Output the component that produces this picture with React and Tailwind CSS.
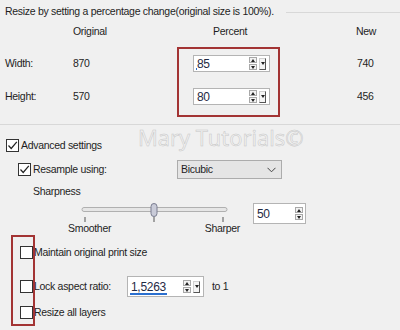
import React from "react";

const Spin = ({ value, dropdown = true, bar = 0, className = "" }) => {
  return (
    <div className={`relative flex items-center bg-white border border-[#b4b4b4] ${className}`}>
      <span className="pl-[3px] text-[12px] text-[#1f2a44] leading-none flex-1">{value}</span>
      {/* up / down buttons */}
      <div className="flex flex-col gap-[1px] mr-[2px]">
        <div className="w-[8px] h-[6px] border border-[#a8a8a8] bg-[#f2f2f2] flex items-center justify-center">
          <svg width="4" height="3" viewBox="0 0 4 3"><path d="M0 3 L2 0 L4 3 Z" fill="#222" /></svg>
        </div>
        <div className="w-[8px] h-[6px] border border-[#a8a8a8] bg-[#f2f2f2] flex items-center justify-center">
          <svg width="4" height="3" viewBox="0 0 4 3"><path d="M0 0 L2 3 L4 0 Z" fill="#222" /></svg>
        </div>
      </div>
      {dropdown && (
        <div className="w-[7px] h-[12px] mr-[3px] bg-[#f4f4f4] border border-[#d0d0d0] border-r-[#555] border-b-[#555] flex items-start justify-center pt-[3px]">
          <svg width="4" height="3" viewBox="0 0 4 3"><path d="M0 0 L2 3 L4 0 Z" fill="#222" /></svg>
        </div>
      )}
      {bar > 0 && (
        <div className="absolute left-[2px] bottom-[1px] h-[2px] bg-[#2a6fcf]" style={{ width: bar }} />
      )}
    </div>
  );
};

const Check = ({ checked }) => (
  <div className="w-[13px] h-[13px] border border-[#333] bg-white flex items-center justify-center shrink-0">
    {checked && (
      <svg width="11" height="11" viewBox="0 0 11 11">
        <path d="M1.5 5.5 L4.2 8.5 L9.8 1.8" fill="none" stroke="#222" strokeWidth="1.2" />
      </svg>
    )}
  </div>
);

export default function App() {
  return (
    <div
      className="relative w-[400px] h-[330px] overflow-hidden bg-[#f0f0f0] text-[10.5px] tracking-[-0.3px] text-[#1e1e1e]"
      style={{ fontFamily: '"Liberation Sans", Arial, sans-serif' }}
    >
      {/* group header */}
      <div className="h-[24px] flex items-center pl-[5px]">
        <span>Resize by setting a percentage change(original size is 100%).</span>
        <div className="flex-1 ml-[12px] border-t border-[#d8d8d8]" />
      </div>

      {/* column headers */}
      <div className="h-[16px] flex items-center">
        <span className="ml-[73px] w-[140px]">Original</span>
        <span className="w-[143px]">Percent</span>
        <span>New</span>
      </div>

      {/* width row */}
      <div className="mt-[15px] h-[17px] flex items-center">
        <span className="ml-[5px] w-[68px]">Width:</span>
        <span className="w-[120px]">870</span>
        <Spin value="85" bar={1} className="w-[77px] h-[17px]" />
        <span className="ml-[87px]">740</span>
      </div>

      {/* height row */}
      <div className="mt-[16px] h-[17px] flex items-center">
        <span className="ml-[5px] w-[68px]">Height:</span>
        <span className="w-[120px]">570</span>
        <Spin value="80" className="w-[77px] h-[17px]" />
        <span className="ml-[87px]">456</span>
      </div>

      <div className="mt-[19px] border-t border-[#d8d8d8]" />

      {/* advanced settings */}
      <div className="mt-[14px] h-[13px] flex items-center pl-[6px] gap-[2px]">
        <Check checked />
        <span>Advanced settings</span>
      </div>

      <div className="mt-[8px] h-[19px] flex items-center pl-[18px]">
        <Check checked />
        <span className="ml-[2px] w-[144px]">Resample using:</span>
        <div className="w-[105px] h-[19px] bg-[#e5e5e5] border border-[#acacac] flex items-center pl-[3px] pr-[5px]">
          <span className="flex-1">Bicubic</span>
          <svg width="9" height="6" viewBox="0 0 9 6">
            <path d="M0.5 0.8 L4.5 4.8 L8.5 0.8" fill="none" stroke="#444" strokeWidth="1" />
          </svg>
        </div>
      </div>

      <div className="mt-[6px] h-[14px] flex items-center pl-[33px]">Sharpness</div>

      {/* slider */}
      <div className="mt-[4px] flex items-start">
        <div className="ml-[68px] w-[172px] flex flex-col">
          <svg width="160" height="20" viewBox="0 0 160 20" className="ml-[13px]">
            <rect x="1" y="4.5" width="145" height="4" rx="2" fill="#e6e6e6" stroke="#b0b0b0" />
            <line x1="4" y1="14" x2="4" y2="19" stroke="#555" />
            <line x1="73" y1="14" x2="73" y2="19" stroke="#555" />
            <line x1="142" y1="14" x2="142" y2="19" stroke="#555" />
            <rect x="70" y="0.5" width="6" height="13" rx="3" fill="#c9cbd8" stroke="#7a7d90" />
          </svg>
          <div className="h-[12px] flex items-center">
            <span className="w-[137px]">Smoother</span>
            <span>Sharper</span>
          </div>
        </div>
        <Spin value="50" dropdown={false} className="ml-[13px] w-[53px] h-[21px]" />
      </div>

      {/* bottom options */}
      <div className="mt-[11px] h-[13px] flex items-center pl-[20px] gap-[1px]">
        <Check />
        <span>Maintain original print size</span>
      </div>

      <div className="mt-[17px] h-[21px] flex items-center pl-[20px]">
        <Check />
        <span className="ml-[1px] w-[93px]">Lock aspect ratio:</span>
        <Spin value="1,5263" bar={37} className="w-[77px] h-[21px]" />
        <span className="ml-[8px]">to 1</span>
      </div>

      <div className="mt-[9px] h-[13px] flex items-center pl-[20px] gap-[1px]">
        <Check />
        <span>Resize all layers</span>
      </div>

      {/* annotations */}
      <div className="absolute left-[177px] top-[47px] w-[103px] h-[70px] border-2 border-[#a33434]" />
      <div className="absolute left-[11px] top-[235px] w-[24px] h-[91px] border-2 border-[#a33434]" />
      <div
        className="absolute left-[138px] top-[121px] text-[22px] font-normal text-[#f2f2f2] tracking-[0px]"
        style={{ fontFamily: '"Open Sans", sans-serif', WebkitTextStroke: "0.5px #c6c6c6" }}
      >
        Mary Tutorials©
      </div>
    </div>
  );
}
